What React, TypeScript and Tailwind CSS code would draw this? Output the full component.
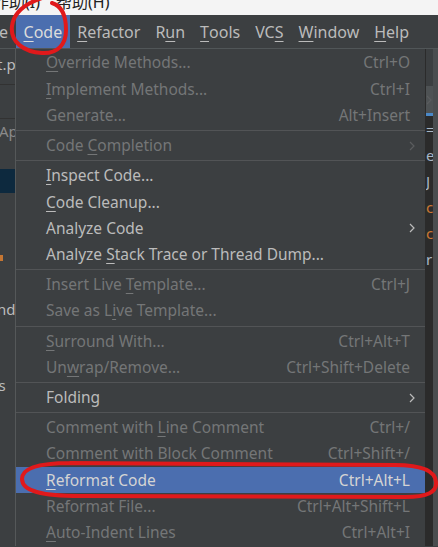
import React from "react";

type Item =
  | "sep"
  | {
      label: string;
      u?: number;
      sc?: string;
      dis?: boolean;
      arrow?: boolean;
      active?: boolean;
    };

const ITEMS: Item[] = [
  { label: "Override Methods...", u: 0, sc: "Ctrl+O", dis: true },
  { label: "Implement Methods...", u: 0, sc: "Ctrl+I", dis: true },
  { label: "Generate...", sc: "Alt+Insert", dis: true },
  "sep",
  { label: "Code Completion", u: 5, arrow: true, dis: true },
  "sep",
  { label: "Inspect Code...", u: 0 },
  { label: "Code Cleanup...", u: 0 },
  { label: "Analyze Code", arrow: true },
  { label: "Analyze Stack Trace or Thread Dump...", u: 8 },
  "sep",
  { label: "Insert Live Template...", u: 12, sc: "Ctrl+J", dis: true },
  { label: "Save as Live Template...", u: 9, dis: true },
  "sep",
  { label: "Surround With...", u: 0, sc: "Ctrl+Alt+T", dis: true },
  { label: "Unwrap/Remove...", u: 2, sc: "Ctrl+Shift+Delete", dis: true },
  "sep",
  { label: "Folding", arrow: true },
  "sep",
  { label: "Comment with Line Comment", u: 13, sc: "Ctrl+/", dis: true },
  { label: "Comment with Block Comment", u: 13, sc: "Ctrl+Shift+/", dis: true },
  { label: "Reformat Code", u: 0, sc: "Ctrl+Alt+L", active: true },
  { label: "Reformat File...", sc: "Ctrl+Alt+Shift+L", dis: true },
  { label: "Auto-Indent Lines", u: 0, sc: "Ctrl+Alt+I", dis: true },
];

const MENUBAR = [
  { label: "Code", u: 0, active: true },
  { label: "Refactor", u: 0 },
  { label: "Run", u: 1 },
  { label: "Tools", u: 0 },
  { label: "VCS", u: 2 },
  { label: "Window", u: 0 },
  { label: "Help", u: 0 },
];

function Mnemonic({ text, u }: { text: string; u?: number }) {
  if (u === undefined) return <>{text}</>;
  return (
    <>
      {text.slice(0, u)}
      <span className="underline underline-offset-[3px] decoration-1">{text[u]}</span>
      {text.slice(u + 1)}
    </>
  );
}

function Chevron({ dim }: { dim?: boolean }) {
  return (
    <svg width="6" height="10" viewBox="0 0 6 10" className={dim ? "text-[#5b5d5f]" : "text-[#bbbbbb]"}>
      <path d="M1 1l4 4-4 4" fill="none" stroke="currentColor" strokeWidth="1.2" />
    </svg>
  );
}

function MenuRow({ item }: { item: Exclude<Item, "sep"> }) {
  const text = item.active ? "text-[#d4d4d4]" : item.dis ? "text-[#747677]" : "text-[#bbbbbb]";
  return (
    <div
      className={`flex h-[26.3px] items-center justify-between pl-[30px] pr-[15px] ${
        item.active ? "bg-[#4b6eaf]" : ""
      }`}
    >
      <span className={`text-[15.5px] ${text}`}>
        <Mnemonic text={item.label} u={item.u} />
      </span>
      {item.sc && <span className={`text-[15.5px] ${text}`}>{item.sc}</span>}
      {item.arrow && (
        <span className="-mr-[5px]">
          <Chevron dim={item.dis} />
        </span>
      )}
    </div>
  );
}

export default function App() {
  return (
    <div
      className="relative h-[547px] w-[438px] overflow-hidden bg-[#3c3f41]"
      style={{ fontFamily: '"Noto Sans", "Noto Sans CJK SC", sans-serif' }}
    >
      {/* window title menu, clipped */}
      <div className="h-[15px] overflow-hidden bg-[#f4f4f4]">
        <div className="-mt-[9px] -ml-[7px] flex gap-[16px] text-[16px] leading-[22px] text-[#222]">
          <span>作助(I)</span>
          <span>帮助(H)</span>
        </div>
      </div>

      {/* IDE menubar */}
      <div className="flex h-[34px] items-stretch border-b border-[#515658] text-[16px] text-[#bbbbbb]">
        <div className="flex w-[16px] items-center overflow-hidden">
          <span className="-ml-[1px]">e</span>
        </div>
        {MENUBAR.map((m) => (
          <div
            key={m.label}
            className={`flex items-center px-[7.5px] ${m.active ? "bg-[#4b6eaf] text-[#dcdcdc]" : ""}`}
          >
            <Mnemonic text={m.label} u={m.u} />
          </div>
        ))}
      </div>

      <div className="flex h-[497px]">
        {/* project tool window, mostly hidden */}
        <div className="flex w-[16px] flex-col border-r border-[#555859] text-[15px] text-[#bbbbbb]">
          <div className="flex h-[30px] items-center overflow-hidden">
            <span className="-ml-[3px]">t.p</span>
          </div>
          <div className="h-[5px]" />
          <div className="h-px bg-[#323232]" />
          <div className="h-[33px]" />
          <div className="h-px bg-[#323232]" />
          <div className="flex h-[24px] items-center overflow-hidden text-[#8a8a8a]">
            <span className="-ml-[1px]">Ap</span>
          </div>
          <div className="h-[26px]" />
          <div className="h-[24px] bg-[#0d293e]" />
          <div className="h-[62px]" />
          <div className="h-[6px] w-[3px] bg-[#c57633]" />
          <div className="h-[38px]" />
          <div className="flex h-[20px] items-center overflow-hidden">
            <span className="-ml-[3px]">nd</span>
          </div>
          <div className="h-[56px]" />
          <div className="flex h-[20px] items-center overflow-hidden">
            <span className="-ml-[7px]">ts</span>
          </div>
        </div>

        {/* Code menu popup */}
        <div className="flex w-[410px] flex-col border-r border-[#2b2b2b] bg-[#3c3f41] pt-px">
          {ITEMS.map((it, i) =>
            it === "sep" ? (
              <div key={i} className="flex h-[4px] items-center">
                <div className="h-px w-full bg-[#525456]" />
              </div>
            ) : (
              <MenuRow key={i} item={it} />
            )
          )}
        </div>

        {/* editor edge */}
        <div className="flex w-[7px] flex-col">
          <div className="h-[37px] bg-[#3c3f41]" />
          <div className="flex h-[27px] items-center overflow-hidden bg-[#4e5254]">
            <Chevron dim />
          </div>
          <div className="h-[3px] bg-[#4a88c7]" />
          <div className="flex-1 overflow-hidden bg-[#2b2b2b] text-[15px] leading-[26px] text-[#a9b7c6]">
            <div>=</div>
            <div>e</div>
            <div>J</div>
            <div className="text-[#cc7832]">c</div>
            <div className="text-[#cc7832]">c</div>
            <div>r</div>
          </div>
        </div>
        <div className="w-[5px] bg-[#4a4d4f]" />
      </div>

      {/* red hand-drawn marks */}
      <svg className="pointer-events-none absolute inset-0" width="438" height="547" viewBox="0 0 438 547">
        <path
          d="M42 -2 C 30 2, 14 10, 12 26 C 10 42, 24 52, 42 53 C 58 54, 66 44, 66 30 C 66 16, 62 6, 52 3"
          fill="none"
          stroke="#e0191b"
          strokeWidth="4"
          strokeLinecap="round"
        />
        <path
          d="M70 463 C 40 463, 22 468, 22 479 C 22 491, 42 496, 80 496 L 405 497 C 428 497, 437 492, 436 482 C 435 470, 420 465, 395 465 L 70 463"
          fill="none"
          stroke="#e0191b"
          strokeWidth="4"
          strokeLinecap="round"
        />
      </svg>
    </div>
  );
}
